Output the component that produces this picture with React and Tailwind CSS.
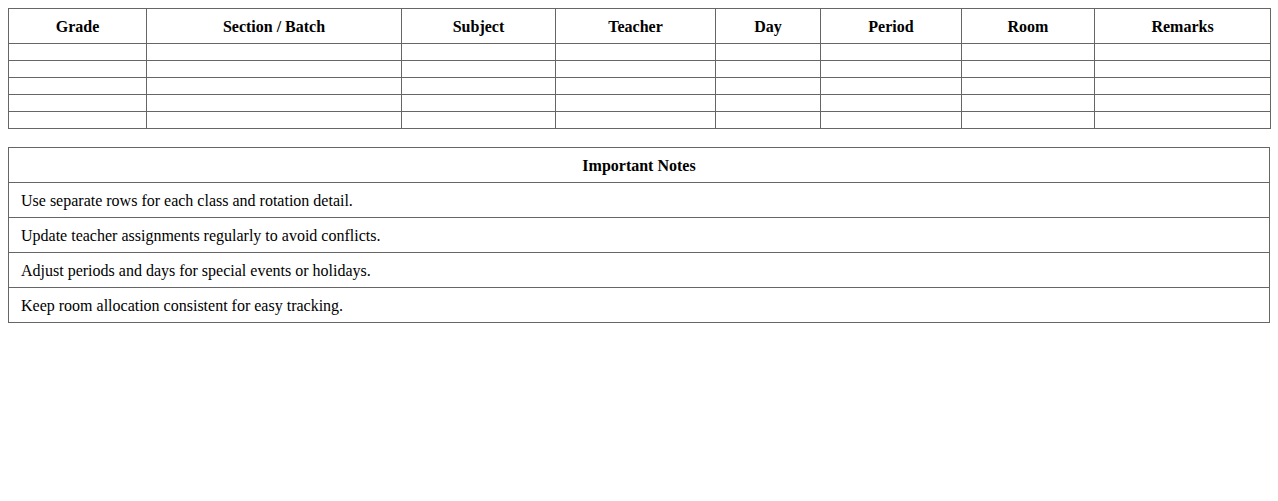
import React from "react";

const cols = ["Grade", "Section / Batch", "Subject", "Teacher", "Day", "Period", "Room", "Remarks"];
const widths = ["w-[138px]", "w-[255px]", "w-[154px]", "w-[160px]", "w-[105px]", "w-[141px]", "w-[133px]", "w-[176px]"];
const notes = [
  "Use separate rows for each class and rotation detail.",
  "Update teacher assignments regularly to avoid conflicts.",
  "Adjust periods and days for special events or holidays.",
  "Keep room allocation consistent for easy tracking.",
];

export default function App() {
  return (
    <div className="p-2 bg-white text-black text-[16px] leading-[18px]" style={{ fontFamily: '"Liberation Serif", "Times New Roman", serif' }}>
      <table className="w-full table-fixed border-collapse">
        <colgroup>
          {widths.map((w, i) => (
            <col key={i} className={w} />
          ))}
        </colgroup>
        <thead>
          <tr>
            {cols.map((c) => (
              <th key={c} className="border border-[#666] px-3 pt-[9px] pb-[7px] font-bold text-center">
                {c}
              </th>
            ))}
          </tr>
        </thead>
        <tbody>
          {[0, 1, 2, 3, 4].map((r) => (
            <tr key={r}>
              {cols.map((c) => (
                <td key={c} className="border border-[#666] px-3 py-2 h-[17px]"></td>
              ))}
            </tr>
          ))}
        </tbody>
      </table>

      <table className="w-full border-collapse mt-[18px]">
        <thead>
          <tr>
            <th className="border border-[#666] px-3 pt-[9px] pb-[7px] font-bold text-center">Important Notes</th>
          </tr>
        </thead>
        <tbody>
          {notes.map((n) => (
            <tr key={n}>
              <td className="border border-[#666] px-3 pt-[9px] pb-[7px] text-left">{n}</td>
            </tr>
          ))}
        </tbody>
      </table>
    </div>
  );
}
